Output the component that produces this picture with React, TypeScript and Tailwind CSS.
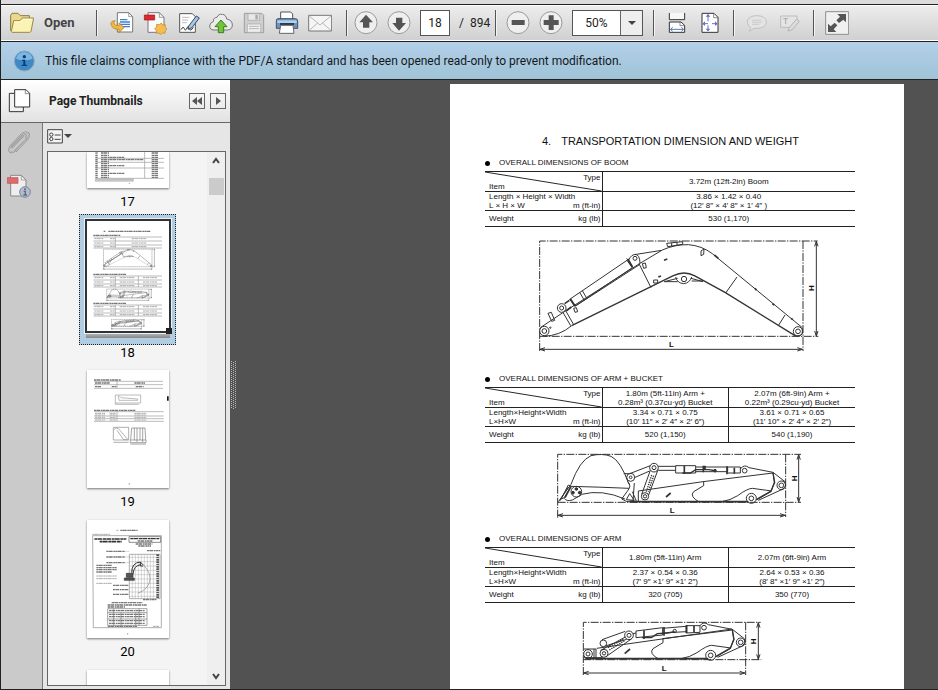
import { useState } from "react";
import type { ReactNode } from "react";

const INK = "#333";

function Icon({ box, children, size = "h-6 w-6" }: { box: string; children: ReactNode; size?: string }) {
  return (
    <svg viewBox={box} className={`${size} shrink-0`} fill="none" strokeLinejoin="round" aria-hidden="true">
      {children}
    </svg>
  );
}

function ToolButton({ label, box, children }: { label: string; box: string; children: ReactNode }) {
  return (
    <button type="button" aria-label={label} className="shrink-0">
      <Icon box={box}>{children}</Icon>
    </button>
  );
}

function Separator() {
  return <div className="h-[26px] w-px shrink-0 bg-[#555] shadow-[1px_0_0_#f4f4f4]" />;
}

/* Toolbar */

function Toolbar() {
  const [page, setPage] = useState("18");

  return (
    <div className="flex h-9 shrink-0 items-center overflow-hidden border-y border-white bg-gradient-to-b from-[#ededed] to-[#d0d0d0] pl-[9px] text-[13px] text-[#222]">
      <button type="button" className="flex w-[86px] shrink-0 items-center gap-[10px] font-bold text-[#444]">
        <Icon box="30 33 72 72">
          <path d="M32 92V46l4-6h18l7 7h27v8" fill="#ead98a" stroke="#8a7a45" strokeWidth="3" />
          <path d="M34 95l7-33h19l7-8h34l-8 40q-1 3-5 3H36z" fill="#fbf3b4" stroke="#9b8746" strokeWidth="3" />
          <path d="M42 66h20l7-8h26" stroke="#fffde0" strokeWidth="3" />
        </Icon>
        Open
      </button>
      <Separator />

      <div className="ml-[13px] mr-[14px] flex shrink-0 gap-[9px]">
        <ToolButton label="Export" box="330 33 72 72">
          <path d="M352 38h34l12 12v46h-46z" fill="#fff" stroke="#777" strokeWidth="3" />
          <path d="M386 38v12h12" stroke="#777" strokeWidth="2" />
          <path d="M360 59h22M360 66h30M360 73h30M366 80h24" stroke="#3f7fd0" strokeWidth="4" />
          <path d="M346 62q-15 0-13 12 4 14 24 14v10l15-15-15-15v9q-12 0-15-5-2-6 4-10z" fill="#f3b63f" stroke="#a97823" strokeWidth="2" />
        </ToolButton>
        <ToolButton label="Create PDF" box="429 33 72 72">
          <path d="M444 38h34l14 14v45h-48z" fill="#fafafa" stroke="#777" strokeWidth="3" />
          <path d="M478 38v14h14" stroke="#777" strokeWidth="2" />
          <rect x="433" y="45" width="31" height="15" fill="#d92a2e" stroke="#a01519" strokeWidth="2" />
          <path d="M484 69l4 6 8-1v8l5 5-5 5-1 8-8-1-5 5-5-5-8 1v-8l-5-6 6-5v-8l8 1z" fill="#f5bc4e" stroke="#b98228" strokeWidth="2" />
        </ToolButton>
        <ToolButton label="Sign document" box="528 33 72 72">
          <path d="M539 41h38l9 9v47h-47z" fill="#fff" stroke="#555" strokeWidth="3" />
          <path d="M546 52h22M546 60h18M546 68h14" stroke="#999" strokeWidth="2" />
          <path d="M543 89q7-12 10-3t8-2 7 1 12-3" stroke="#333" strokeWidth="3" />
          <path d="M566 78l23-30 9 6-22 29-12 5z" fill="#a8c5e4" stroke="#354b68" strokeWidth="3" />
        </ToolButton>
        <ToolButton label="Upload" box="627 33 72 72">
          <path d="M642 90q-13 0-13-12 0-10 11-13-1-12 11-13 4-11 16-9 11 1 13 14 17 3 17 18 0 14-15 15z" fill="#ececec" stroke="#777" strokeWidth="3" />
          <path d="M663 60l18 20h-10v18h-16V80h-10z" fill="#74c33c" stroke="#35801c" strokeWidth="3" />
        </ToolButton>
        <ToolButton label="Save" box="726 33 72 72">
          <path d="M733 40h52l6 6v52h-58z" fill="#cfcfcf" stroke="#9d9d9d" strokeWidth="3" />
          <path d="M744 41h34v20h-34z" fill="#e8e8e8" stroke="#a4a4a4" strokeWidth="2" />
          <path d="M766 44h7v14h-7z" fill="#a6a6a6" />
          <path d="M742 72h40v25h-40z" fill="#efefef" stroke="#a4a4a4" strokeWidth="2" />
          <path d="M747 79h30M747 86h30" stroke="#b6b6b6" strokeWidth="3" />
        </ToolButton>
        <ToolButton label="Print" box="825 33 72 72">
          <path d="M842 58V36h30l6 6v16" fill="#fff" stroke="#555" strokeWidth="3" />
          <path d="M834 56h52q7 0 7 7v22h-64V63q0-7 5-7z" fill="#6f93bd" stroke="#3d536e" strokeWidth="3" />
          <path d="M832 61h58v8h-58z" fill="#b5d1ea" />
          <path d="M840 69h42v6h-42z" fill="#2d3b4e" />
          <path d="M842 76h37l3 24h-44z" fill="#fff" stroke="#666" strokeWidth="3" />
        </ToolButton>
        <ToolButton label="Email" box="924 33 72 72">
          <path d="M926 46h69v47h-69z" fill="#f5f5f5" stroke="#777" strokeWidth="3" />
          <path d="M928 48l32 27 33-27M928 91l25-22M993 91l-26-22" stroke="#999" strokeWidth="2" />
        </ToolButton>
      </div>
      <Separator />

      <div className="ml-[7px] mr-[6px] flex shrink-0 items-center gap-[9px]">
        <ToolButton label="Previous page" box="43 33 72 72">
          <circle cx="79" cy="68" r="33" fill="#efefef" stroke="#999" strokeWidth="3" />
          <path d="M79 44l21 23H89v16H70V67H59z" fill="#555" />
        </ToolButton>
        <ToolButton label="Next page" box="142 33 72 72">
          <circle cx="178" cy="68" r="33" fill="#efefef" stroke="#999" strokeWidth="3" />
          <path d="M178 92l21-23h-11V53h-19v16h-11z" fill="#555" />
        </ToolButton>
        <input
          aria-label="Page number"
          value={page}
          onChange={(e) => setPage(e.target.value)}
          className="h-[26px] w-[30px] border border-[#555] bg-white text-center text-[12px]"
        />
        <span className="w-[30px] whitespace-pre text-[12px]">/  894</span>
      </div>
      <Separator />

      <div className="mx-[10px] flex shrink-0 items-center gap-[9px]">
        <ToolButton label="Zoom out" box="499 33 72 72">
          <circle cx="535" cy="68" r="33" fill="#efefef" stroke="#999" strokeWidth="3" />
          <path d="M516 60h39v15h-39z" fill="#555" />
        </ToolButton>
        <ToolButton label="Zoom in" box="598 33 72 72">
          <circle cx="634" cy="68" r="33" fill="#efefef" stroke="#999" strokeWidth="3" />
          <path d="M627 46h15v14h15v15h-15v15h-15V75h-15V60h15z" fill="#555" />
        </ToolButton>
        <div className="relative h-[26px] w-[71px]">
          <select
            aria-label="Zoom level"
            defaultValue="50"
            className="h-full w-full appearance-none border border-[#555] bg-white pr-[22px] text-center text-[12px]"
          >
            <option value="50">50%</option>
            <option value="100">100%</option>
          </select>
          <span className="pointer-events-none absolute inset-y-px right-px flex w-[22px] items-center justify-center border-l border-[#666] bg-[#eee]">
            <svg viewBox="0 0 8 4" className="h-1 w-2">
              <path d="M0 0h8L4 4z" fill="#444" />
            </svg>
          </span>
        </div>
      </div>
      <Separator />

      <div className="mx-[11px] flex shrink-0 gap-[9px]">
        <ToolButton label="Fit width" box="75 33 72 72">
          <path d="M88 39v20h46V39" fill="#f7f7f7" stroke="#333" strokeWidth="3" />
          <path d="M88 66h35l11 10v21H88z" fill="#fff" stroke="#333" strokeWidth="3" />
          <path d="M120 66v11h13" stroke="#555" strokeWidth="2" />
          <path d="M92 88h38M98 82l-7 6 7 6M124 82l7 6-7 6" stroke="#5376b4" strokeWidth="3" />
        </ToolButton>
        <ToolButton label="Fit page" box="176 33 72 72">
          <path d="M188 40h36l12 12v45h-48z" fill="#fff" stroke="#333" strokeWidth="3" />
          <path d="M223 40v13h12" stroke="#555" strokeWidth="2" />
          <path d="M206 44v20M206 76v17M191 71h15M218 71h14" stroke="#6672bb" strokeWidth="3" />
          <path d="M199 50l7-8 7 8zM199 86l7 8 7-8zM197 64l-8 7 8 7zM227 64l8 7-8 7z" fill="#6672bb" />
        </ToolButton>
      </div>
      <Separator />

      <div className="mx-[11px] flex shrink-0 gap-[9px]">
        <ToolButton label="Comment" box="315 33 72 72">
          <path d="M350 47c18 0 29 8 29 19s-11 19-28 19l-9 0-14 9 4-12c-6-4-10-9-10-16 0-11 11-19 28-19z" fill="#e4e4e4" stroke="#c0c0c0" strokeWidth="3" />
          <path d="M336 61h29M336 67h29M336 73h22" stroke="#bdbdbd" strokeWidth="2" />
        </ToolButton>
        <ToolButton label="Edit text" box="414 33 72 72">
          <path d="M456 82h-34V48h49v14" fill="#e4e4e4" stroke="#bcbcbc" strokeWidth="3" />
          <path d="M430 56h14M437 56v16" stroke="#aaa" strokeWidth="3" />
          <path d="M447 84l22-26 9 6-21 25-13 4z" fill="#ddd" stroke="#b4b4b4" strokeWidth="3" />
        </ToolButton>
      </div>
      <Separator />

      <div className="ml-[11px] flex shrink-0">
        <ToolButton label="Full screen" box="555 33 72 72">
          <rect x="557" y="35" width="69" height="68" fill="#f0f0f0" stroke="#8e8e8e" strokeWidth="3" />
          <path d="M618 42v25l-8-8-13 10-8-8 11-11-8-8zM564 96V71l8 8 12-11 8 8-11 12 8 8z" fill="#555" />
        </ToolButton>
      </div>
    </div>
  );
}

function MessageBar() {
  return (
    <div role="status" className="flex h-[37px] shrink-0 items-center gap-[9px] overflow-hidden bg-gradient-to-b from-[#b3d0e8] to-[#9fc3d7] pl-[11px] text-[12px] text-[#14181c]">
      <Icon box="36 147 72 72">
        <circle cx="73" cy="183" r="30" fill="#3f8ac4" stroke="#8fa9bf" strokeWidth="3" />
        <path d="M48 176q5-19 25-20 20 1 25 20-25 9-50 0z" fill="#7db7e0" />
        <circle cx="73" cy="170" r="5" fill="#0d3c7c" />
        <path d="M66 179h10v15h5v4H65v-4h5v-11h-4z" fill="#0d3c7c" />
      </Icon>
      <p className="whitespace-nowrap">
        This file claims compliance with the PDF/A standard and has been opened read-only to prevent modification.
      </p>
    </div>
  );
}

/* Technical drawings */

function DimensionH({ x, top, bottom }: { x: number; top: number; bottom: number }) {
  return (
    <path d={`M${x} ${top}V${bottom}M${x - 5} ${top + 16}l5-15 5 15M${x - 5} ${bottom - 16}l5 15 5-15`} />
  );
}

function DimensionL({ y, left, right }: { y: number; left: number; right: number }) {
  return (
    <path d={`M${left} ${y}H${right}M${left + 16} ${y - 5}l-15 5 15 5M${right - 16} ${y - 5}l15 5-15 5`} />
  );
}

function BoomLines() {
  return (
    <>
      <path d="M44 360V30H878M834 30V360M44 316H880" strokeDasharray="24 4 4 4" />
      <DimensionH x={874} top={30} bottom={316} />
      <DimensionL y={355} left={44} right={833} />
      <path d="M46 290L112 246 345 97 412 57Q450 40 490 41 530 44 562 68L832 290" />
      <path d="M140 284L445 134Q478 118 508 134L600 184 810 314" strokeWidth="4" />
      <path d="M56 316Q105 314 140 284M832 292V308Q824 318 808 314" />
      <circle cx="58" cy="300" r="14" />
      <circle cx="58" cy="300" r="7" />
      <circle cx="819" cy="301" r="14" />
      <circle cx="819" cy="301" r="7" />
      <path d="M115 246l22 38M123 241l22 38M342 98l36 72M636 138l-34 48M780 252l-20 32" />
      <path d="M134 205L306 88l16 22L152 224zM164 184l14 24M172 179l14 24M305 82l18 26" />
      <path d="M136 204l14 22M308 84l14 24" strokeWidth="6" />
      <path d="M150 226L345 100" />
      <circle cx="110" cy="231" r="13" />
      <circle cx="110" cy="231" r="6" />
      <path d="M119 218l14-10M123 240l16-12" strokeWidth="5" />
      <path d="M312 86Q318 70 334 70L410 58M345 96Q344 70 330 70" />
      <circle cx="330" cy="82" r="6" />
      <path d="M425 37l48-5v8l-45 7zM440 36v10M456 34v9" />
      <path d="M69 247l10-3 10 24-9 3z" />
      <circle cx="76" cy="290" r="2" />
      <path d="M352 98l9-2 3 14-8 2zM146 232l8-2 4 12-8 2zM528 60l9-6-1 16-8 4zM386 147l12 0 0 9-12 0z" />
      <path d="M417 88l10-4M400 138l8-3" strokeWidth="5" />
      <path d="M418 152l40-10M498 142l36 10M452 138q4 18 24 20 18-2 24-20M418 152h40M500 150h34" />
      <circle cx="477" cy="144" r="8" />
      <path d="M568 72l12 10M690 172l4 6M742 218l6 4M798 262l6 4" strokeWidth="5" />
    </>
  );
}

function BoomDrawing() {
  return (
    <svg viewBox="0 0 930 375" className="ml-10 mt-1 h-[125px] w-[310px]" fill="none" stroke={INK} strokeWidth="3" role="img" aria-label="Boom dimensions">
      <BoomLines />
      <g fill="#111" stroke="none" fontSize="24" fontWeight="bold">
        <text x="432" y="348">L</text>
        <text transform="translate(868 180) rotate(-90)">H</text>
      </g>
    </svg>
  );
}

// Body of the arm, shared by the arm + bucket and the arm-only views
function ArmBody() {
  return (
    <>
      <path d="M586 66q12-16 26-4L684 76 720 104q6 14-6 22L640 160M684 76l4 30-10 28-42 24" />
      <path d="M684 78l5 28-11 26-44 26" strokeWidth="4" />
      <path d="M684 78L474 104M476 104v12l-30 18q-14 14 18 32M530 164q26-4 48-18 30-22 44-22l58 8" />
      <circle cx="599" cy="71" r="7" />
      <circle cx="709" cy="115" r="13" />
      <circle cx="709" cy="115" r="7" />
      <circle cx="619" cy="154" r="15" />
      <circle cx="619" cy="154" r="7" />
    </>
  );
}

function ArmBucketLines() {
  return (
    <>
      <path d="M38 212V22H768M722 22V210M38 166H768" strokeDasharray="24 4 4 4" />
      <DimensionH x={761} top={22} bottom={166} />
      <DimensionL y={205} left={38} right={721} />
      <path d="M40 164L78 112Q104 40 138 26q34-8 60 2 28 12 54 84M78 118Q160 120 252 124M110 142q60-16 130 14" />
      <path d="M48 156l22-42 8 4-20 34zM58 154q6 10 24 5l28-16M44 162l26-42" />
      <path d="M60 152l18-34" strokeWidth="5" />
      <circle cx="94" cy="134" r="16" />
      <g fill={INK}>
        <circle cx="94" cy="126" r="4" />
        <circle cx="84" cy="137" r="4" />
        <circle cx="104" cy="137" r="4" />
      </g>
      <path d="M236 80h18l62-24M268 92l46-20M248 104q14 12-2 30l-16 22q14 12 34 6l4-54" />
      <circle cx="257" cy="91" r="12" />
      <circle cx="257" cy="91" r="4" />
      <circle cx="327" cy="62" r="13" />
      <circle cx="327" cy="62" r="6" />
      <circle cx="300" cy="148" r="11" />
      <circle cx="300" cy="148" r="5" />
      <path d="M316 70l-26 72M339 68l-28 76" />
      <path d="M320 84l-16 50M326 86l-16 48" strokeWidth="4" strokeDasharray="4 3" />
      <path d="M244 158l10-18 14 20zM262 134l12 28M280 132v32" />
      <path d="M254 164H610" strokeWidth="5" />
      <path d="M280 132L474 104M340 58h52M340 70h52" />
      <path d="M363 150l14-12" strokeWidth="5" />
      <path d="M392 56h60v22h-60zM452 60h96v14h-96M546 60h40v18h-40" />
      <path d="M418 56v24M475 56v20M546 58v24M568 62v18M480 56v10" strokeWidth="5" />
      <path d="M412 78h24l16-10 40 0 22 4" strokeWidth="4" />
      <circle cx="510" cy="71" r="4" />
      <ArmBody />
    </>
  );
}

function ArmBucketDrawing() {
  return (
    <svg viewBox="0 0 795 225" className="ml-[60px] mt-1 h-[75px] w-[265px]" fill="none" stroke={INK} strokeWidth="3" role="img" aria-label="Arm and bucket dimensions">
      <ArmBucketLines />
      <g fill="#111" stroke="none" fontSize="24" fontWeight="bold">
        <text x="374" y="199">L</text>
        <text transform="translate(757 103) rotate(-90)">H</text>
      </g>
    </svg>
  );
}

function ArmLines() {
  return (
    <>
      <path d="M40 186V28H572M527 28V186M40 140H574" strokeDasharray="24 4 4 4" />
      <DimensionH x={565} top={28} bottom={140} />
      <DimensionL y={180} left={40} right={525} />
      <path d="M46 137H415" strokeWidth="5" />
      <circle cx="54" cy="123" r="13" />
      <circle cx="54" cy="123" r="6" />
      <path d="M42 108h36v26H42M72 108v26" />
      <path d="M80 106L486 48M78 134h20" />
      <circle cx="102" cy="121" r="12" />
      <circle cx="102" cy="121" r="5" />
      <circle cx="100" cy="91" r="10" />
      <circle cx="177" cy="67" r="13" />
      <circle cx="177" cy="67" r="6" />
      <path d="M96 80l70-25M106 99l64-20M92 112l74-40M112 128l72-50" />
      <path d="M114 104l48-27M118 111l46-28" strokeWidth="4" strokeDasharray="4 3" />
      <path d="M164 122l16-14" strokeWidth="5" />
      <path d="M198 54l80-10v22l-80 8zM278 46l70-6M278 60l70-4M348 38h42v20l-42 2zM188 62l10-2" />
      <path d="M222 52v26M282 42v26M350 36v24M372 38v20" strokeWidth="5" />
      <path d="M216 74h28l18-12 30-2 22-4" strokeWidth="4" />
      <circle cx="314" cy="54" r="5" />
      <g transform="translate(-197 -27)">
        <ArmBody />
      </g>
    </>
  );
}

function ArmDrawing() {
  return (
    <svg viewBox="0 0 615 225" className="ml-[85px] mt-[10px] h-[75px] w-[205px]" fill="none" stroke={INK} strokeWidth="3" role="img" aria-label="Arm dimensions">
      <ArmLines />
      <g fill="#111" stroke="none" fontSize="24" fontWeight="bold">
        <text x="275" y="173">L</text>
        <text transform="translate(558 94) rotate(-90)">H</text>
      </g>
    </svg>
  );
}

/* Document page */

type SpecColumn = { type: string[]; size: string[]; weight: string };

function SpecTable({ title, times, columns }: { title: string; times: string; columns: SpecColumn[] }) {
  return (
    <section>
      <h2 className="flex h-3 items-center gap-[9px] text-[8px] leading-3">
        <span className="h-[5px] w-[5px] rounded-full bg-black" />
        {title}
      </h2>
      <table className="mt-[2px] w-[370px] table-fixed border-collapse border-y border-[#222] text-center text-[8px] leading-[9px]">
        <thead>
          <tr className="h-[20px] border-b border-[#222]">
            <th className="relative w-[117px] border-r border-[#222] p-0 font-normal">
              <svg viewBox="0 0 117 20" preserveAspectRatio="none" className="absolute inset-0 h-full w-full">
                <path d="M0 0L117 20" stroke="#222" />
              </svg>
              <div className="flex h-[19px] justify-between pl-1 pr-px">
                <span className="self-end">Item</span>
                <span className="pt-px">Type</span>
              </div>
            </th>
            {columns.map((col) => (
              <th key={col.weight} className="border-r border-[#222] p-0 font-normal last:border-r-0">
                {col.type.map((line) => (
                  <div key={line}>{line}</div>
                ))}
              </th>
            ))}
          </tr>
        </thead>
        <tbody>
          <tr className="h-[19px] border-b border-[#222]">
            <th className="border-r border-[#222] p-0 pl-1 pr-px text-left font-normal">
              <div>{`Length${times}Height${times}Width`}</div>
              <div className="flex justify-between">
                <span>{`L${times}H${times}W`}</span>
                <span>m (ft-in)</span>
              </div>
            </th>
            {columns.map((col) => (
              <td key={col.weight} className="whitespace-nowrap border-r border-[#222] p-0 last:border-r-0">
                {col.size.map((line) => (
                  <div key={line}>{line}</div>
                ))}
              </td>
            ))}
          </tr>
          <tr className="h-[16px]">
            <th className="border-r border-[#222] p-0 pl-1 pr-px font-normal">
              <div className="flex justify-between">
                <span>Weight</span>
                <span>kg (lb)</span>
              </div>
            </th>
            {columns.map((col) => (
              <td key={col.weight} className="border-r border-[#222] p-0 last:border-r-0">
                {col.weight}
              </td>
            ))}
          </tr>
        </tbody>
      </table>
    </section>
  );
}

const boom: SpecColumn[] = [
  { type: ["3.72m (12ft-2in) Boom"], size: ["3.86 × 1.42 × 0.40", "(12′ 8″ × 4′ 8″ × 1′ 4″ )"], weight: "530 (1,170)" },
];

const armBucket: SpecColumn[] = [
  { type: ["1.80m (5ft-11in) Arm +", "0.28m³ (0.37cu·yd) Bucket"], size: ["3.34 × 0.71 × 0.75", "(10′ 11″ × 2′ 4″ × 2′ 6″)"], weight: "520 (1,150)" },
  { type: ["2.07m (6ft-9in) Arm +", "0.22m³ (0.29cu·yd) Bucket"], size: ["3.61 × 0.71 × 0.65", "(11′ 10″ × 2′ 4″ × 2′ 2″)"], weight: "540 (1,190)" },
];

const arm: SpecColumn[] = [
  { type: ["1.80m (5ft-11in) Arm"], size: ["2.37 × 0.54 × 0.36", "(7′ 9″ ×1′ 9″ ×1′ 2″)"], weight: "320 (705)" },
  { type: ["2.07m (6ft-9in) Arm"], size: ["2.64 × 0.53 × 0.36", "(8′ 8″ ×1′ 9″ ×1′ 2″)"], weight: "350 (770)" },
];

function DocumentPage() {
  return (
    <article className="w-[454px] shrink-0 bg-white pb-px pl-[35px] pt-[50px] font-['Liberation_Sans',Arial,sans-serif] text-[#111]">
      <h1 className="mb-[9px] flex gap-[10px] pl-[57px] text-[11px] leading-[14px]">
        <span>4.</span>
        <span>TRANSPORTATION DIMENSION AND WEIGHT</span>
      </h1>
      <SpecTable title="OVERALL DIMENSIONS OF BOOM" times=" × " columns={boom} />
      <BoomDrawing />
      <div className="mt-[17px]">
        <SpecTable title="OVERALL DIMENSIONS OF ARM + BUCKET" times="×" columns={armBucket} />
      </div>
      <ArmBucketDrawing />
      <div className="mt-[11px]">
        <SpecTable title="OVERALL DIMENSIONS OF ARM" times="×" columns={arm} />
      </div>
      <ArmDrawing />
    </article>
  );
}

/* Thumbnails */

function TextRow({ x, y, w, bold }: { x: number; y: number; w: number; bold?: boolean }) {
  return <path d={`M${x} ${y}h${w}`} stroke={bold ? "#777" : "#aaa"} strokeWidth={bold ? 4 : 3} strokeDasharray="7 1 11 2 5 1" />;
}

function Thumb17() {
  const rows = [219, 226, 232, 239, 244, 251, 257, 262, 268, 274, 280, 286, 292];
  return (
    <svg viewBox="258 216 246 108" className="h-9 w-[82px]" fill="none">
      {rows.map((y, i) => (
        <g key={y}>
          <TextRow x={283} y={y} w={8} bold />
          <TextRow x={300} y={y} w={i === 3 ? 128 : i % 4 === 2 ? 70 : 24} bold />
          <TextRow x={452} y={y} w={20} bold />
        </g>
      ))}
      <path d="M283 235h206M283 247h206M283 264h206M283 295h206M431 216v79" stroke="#999" strokeWidth="2" />
      <path d="M283 297h114v7H283z" fill="#ccc" stroke="#888" />
      <path d="M385 309v3" stroke="#777" strokeWidth="2" />
    </svg>
  );
}

function ThumbTable({ y, split }: { y: number; split: boolean }) {
  return (
    <g>
      <TextRow x={157} y={y - 5} w={split ? 98 : 82} bold />
      <path d={`M157 ${y}h206M157 ${y + 12}h206M157 ${y + 24}h206M157 ${y + 33}h206M223 ${y}v33`} stroke="#999" strokeWidth="2" />
      {split && <path d={`M292 ${y}v33`} stroke="#999" strokeWidth="2" />}
      {[5, 18, 29].map((dy) => (
        <g key={dy}>
          <TextRow x={160} y={y + dy} w={28} />
          <TextRow x={207} y={y + dy} w={14} />
          <TextRow x={split ? 236 : 272} y={y + dy} w={44} />
          {split && <TextRow x={306} y={y + dy} w={42} />}
        </g>
      ))}
    </g>
  );
}

function Thumb18() {
  return (
    <svg viewBox="138 48 246 330" className="h-[110px] w-[82px]" fill="none">
      <TextRow x={188} y={79} w={5} bold />
      <TextRow x={202} y={79} w={126} bold />
      <ThumbTable y={96} split={false} />
      <svg x="179" y="127" width="172" height="69" viewBox="0 0 930 375" stroke="#777" strokeWidth="8">
        <BoomLines />
      </svg>
      <ThumbTable y={213} split />
      <svg x="190" y="248" width="147" height="42" viewBox="0 0 795 225" stroke="#666" strokeWidth="7">
        <ArmBucketLines />
      </svg>
      <ThumbTable y={300} split />
      <svg x="204" y="338" width="114" height="42" viewBox="0 0 615 225" stroke="#666" strokeWidth="7">
        <ArmLines />
      </svg>
    </svg>
  );
}

function Thumb19() {
  return (
    <svg viewBox="138 495 246 354" className="h-[118px] w-[82px]" fill="none">
      <TextRow x={159} y={525} w={80} bold />
      <path d="M159 529h207M159 539h207M159 550h207M228 529v21" stroke="#999" strokeWidth="2" />
      <TextRow x={162} y={534} w={44} bold />
      <TextRow x={280} y={534} w={32} bold />
      <TextRow x={162} y={545} w={18} bold />
      <TextRow x={212} y={545} w={14} bold />
      <TextRow x={284} y={545} w={24} bold />
      <path d="M223 570h76v24h-76zM223 594v4h70M232 572l2 14h56v-4l-50-4-6-6" stroke="#999" strokeWidth="2" />
      <path d="M378 574h5v13h-5z" fill="#111" />
      <TextRow x={159} y={616} w={124} bold />
      <path d="M159 620h209M159 633h209M159 641h209M159 649h209M228 620v29" stroke="#999" strokeWidth="2" />
      {[625, 630, 637, 645].map((y) => (
        <g key={y}>
          <TextRow x={162} y={y} w={30} />
          <TextRow x={206} y={y} w={18} />
          <TextRow x={280} y={y} w={36} />
        </g>
      ))}
      <g stroke="#888" strokeWidth="2">
        <path d="M217 667h46v38h-46zM217 712h46M218 675q10-12 18 0l24 28M228 676l20 28h12" />
        <path d="M272 669h40l2 36h-45zM280 669v36M288 669v42M297 669v36M305 669v42M268 705v8h47v-8M268 717h47" stroke="#777" />
      </g>
      <path d="M265 834v5" stroke="#777" strokeWidth="2" />
    </svg>
  );
}

function Thumb20() {
  const columns = [274, 283, 292, 301, 310, 319, 328, 337];
  const lines = [442, 455, 468, 481, 494, 507, 520, 533, 546, 559];
  return (
    <svg viewBox="138 330 246 354" className="h-[118px] w-[82px]" fill="none">
      <TextRow x={226} y={361} w={6} />
      <TextRow x={238} y={361} w={52} bold />
      <TextRow x={154} y={373} w={54} />
      <path d="M155 377h206v276H157z" stroke="#888" strokeWidth="2" />
      <path d="M264 380h95v17h-95z" stroke="#555" strokeWidth="2" />
      <path d="M160 387h96M176 395h66" stroke="#333" strokeWidth="5" strokeDasharray="9 1 14 2" />
      <path d="M268 386h88" stroke="#333" strokeWidth="4" strokeDasharray="9 1 14 2" />
      <TextRow x={290} y={393} w={44} bold />
      <TextRow x={284} y={402} w={50} bold />
      <TextRow x={292} y={408} w={38} bold />
      <TextRow x={318} y={422} w={40} bold />
      <path d="M265 433h92v133h-92z" stroke="#888" strokeWidth="2" />
      {columns.map((x) => (
        <path key={x} d={`M${x} 433v133`} stroke="#888" strokeWidth="1" />
      ))}
      {lines.map((y) => (
        <path key={y} d={`M265 ${y}h82`} stroke="#888" strokeWidth="1" />
      ))}
      <path d="M350 433v133" stroke="#555" strokeWidth="8" strokeDasharray="5 2" />
      <path d="M272 488q0-30 26-32l10 10M276 492q2-26 24-28M298 456v12h8" stroke="#333" strokeWidth="3" />
      <path d="M308 466q24 24 18 50-8 24-36 34" stroke="#888" strokeWidth="2" />
      <path d="M256 490h20v12h-20zM250 504h30v7h-30z" fill="#555" stroke="#333" strokeWidth="2" />
      {[424, 441, 458].map((y) => (
        <g key={y}>
          <TextRow x={196} y={y} w={56} bold />
          <path d={`M252 ${y}h14`} stroke="#888" strokeWidth="1" />
        </g>
      ))}
      {[466, 473, 479, 486, 498, 506, 520].map((y, i) => (
        <TextRow key={y} x={166} y={y} w={i % 3 ? 62 : 48} bold={i < 4} />
      ))}
      {[526, 539, 553].map((y) => (
        <TextRow key={y} x={216} y={y} w={46} bold />
      ))}
      <TextRow x={306} y={569} w={40} bold />
      <TextRow x={212} y={578} w={92} bold />
      <TextRow x={200} y={585} w={118} bold />
      <TextRow x={200} y={591} w={52} bold />
      <path d="M200 596h118v50H200zM200 608h118M200 627h118M218 596v50M240 608v38M284 608v38M294 596v50" stroke="#777" strokeWidth="2" />
      {[602, 613, 620, 632, 640].map((y) => (
        <TextRow key={y} x={204} y={y} w={108} bold />
      ))}
      <TextRow x={200} y={649} w={88} bold />
      <TextRow x={336} y={649} w={18} />
      <path d="M260 669v5" stroke="#777" strokeWidth="2" />
    </svg>
  );
}

function Thumbnail({ page, children }: { page?: number; children: ReactNode }) {
  return (
    <button type="button" className="flex w-[97px] shrink-0 flex-col items-center pt-[6px]">
      <span className="mb-[6px] block bg-white shadow-[0_1px_2px_#777]">{children}</span>
      {page && <span className="h-5 text-[13px] leading-4">{page}</span>}
    </button>
  );
}

function ThumbnailList() {
  return (
    <div className="flex min-h-0 flex-1 border border-[#666] bg-[#f4f4f4]">
      <div className="flex min-w-0 flex-1 flex-col items-center overflow-hidden">
        <button type="button" className="flex w-[97px] shrink-0 flex-col items-center">
          <span className="mb-[6px] block bg-white shadow-[0_1px_2px_#777]">
            <Thumb17 />
          </span>
          <span className="h-5 text-[13px] leading-4">17</span>
        </button>
        <button type="button" aria-current="page" className="flex w-[97px] shrink-0 flex-col items-center">
          <span className="flex h-[131px] w-full flex-col items-center border border-dotted border-[#222] bg-[#b1cde1] pt-[4px]">
            <span className="relative block border-2 border-[#2f3335] bg-white outline outline-1 outline-[#e8f2f8]">
              <Thumb18 />
              <span className="absolute -bottom-[3px] -right-[3px] h-[6px] w-[6px] bg-[#222]" />
            </span>
            <span className="block h-[5px] w-[84px] bg-gradient-to-b from-[#bbb] to-[#888]" />
          </span>
          <span className="h-[19px] text-[13px] leading-4">18</span>
        </button>
        <Thumbnail page={19}>
          <Thumb19 />
        </Thumbnail>
        <Thumbnail page={20}>
          <Thumb20 />
        </Thumbnail>
        <Thumbnail>
          <svg viewBox="0 0 82 118" className="h-[118px] w-[82px]" />
        </Thumbnail>
      </div>
      <div className="flex w-[18px] flex-col items-center justify-between bg-[#efefef]">
        <div className="flex flex-col items-center">
          <button type="button" aria-label="Scroll up" className="flex h-[18px] items-center">
            <svg viewBox="0 0 8 8" className="h-2 w-2" fill="none">
              <path d="M1 6l3-4 3 4" stroke="#444" strokeWidth="2" />
            </svg>
          </button>
          <div className="mt-2 h-[17px] w-[15px] bg-[#cbcbcb]" />
        </div>
        <button type="button" aria-label="Scroll down" className="flex h-[18px] items-center">
          <svg viewBox="0 0 8 8" className="h-2 w-2" fill="none">
            <path d="M1 2l3 4 3-4" stroke="#444" strokeWidth="2" />
          </svg>
        </button>
      </div>
    </div>
  );
}

function SidePanel() {
  return (
    <aside className="flex w-[229px] shrink-0 flex-col bg-[#e6e6e6]">
      <header className="flex h-[43px] shrink-0 items-center border-b border-[#666] bg-gradient-to-b from-white to-[#e2e2e2] pl-[7px] pr-1">
        <button type="button" aria-label="Page thumbnails">
          <Icon box="24 27 72 72">
            <path d="M28 40h42v55H28z" fill="#f2f2f2" stroke="#333" strokeWidth="3" />
            <path d="M44 29h34l11 11v41H44z" fill="#fff" stroke="#333" strokeWidth="3" />
            <path d="M76 30v11h12" stroke="#555" strokeWidth="2" />
          </Icon>
        </button>
        <h2 className="ml-[17px] flex-1 whitespace-nowrap text-[12px] font-bold text-[#222]">Page Thumbnails</h2>
        <div className="flex gap-[5px]">
          <button type="button" aria-label="Collapse" className="flex h-4 w-4 items-center justify-center border border-[#666]">
            <svg viewBox="0 0 10 8" className="h-2 w-[10px]">
              <path d="M5 0v8L0 4zM10 0v8L5 4z" fill="#555" />
            </svg>
          </button>
          <button type="button" aria-label="Expand" className="flex h-4 w-4 items-center justify-center border border-[#666]">
            <svg viewBox="0 0 5 8" className="h-2 w-[5px]">
              <path d="M0 0v8l5-4z" fill="#555" />
            </svg>
          </button>
        </div>
      </header>

      <div className="flex min-h-0 flex-1">
        <nav className="flex w-[42px] shrink-0 flex-col gap-[19px] border-r border-[#777] bg-[#cacaca] pl-[6px] pt-2">
          <button type="button" aria-label="Attachments" className="w-6">
            <Icon box="21 154 72 72">
              <path d="M36 204l35-36q7-5 8 2t-6 14l-28 29q-10 9-16 2-5-7 4-17l32-34q10-9 19-4 7 6-1 17l-34 37" stroke="#888" strokeWidth="5" strokeLinecap="round" />
              <path d="M36 204l35-36q7-5 8 2t-6 14l-28 29q-10 9-16 2-5-7 4-17l32-34q10-9 19-4 7 6-1 17l-34 37" stroke="#e2e2e2" strokeWidth="2" strokeLinecap="round" />
            </Icon>
          </button>
          <button type="button" aria-label="Standards" className="w-6">
            <Icon box="21 283 72 72">
              <path d="M32 287h32l14 14v48H32z" fill="#eee" stroke="#888" strokeWidth="3" />
              <path d="M64 287v14h14" stroke="#888" strokeWidth="2" />
              <path d="M22 294h32v17H22z" fill="#e06b6f" stroke="#b95054" strokeWidth="2" />
              <circle cx="75" cy="337" r="16" fill="#b2bccd" stroke="#7d8798" strokeWidth="3" />
              <circle cx="75" cy="329" r="3" fill="#596a86" />
              <path d="M71 335h5v11M70 346h11" stroke="#596a86" strokeWidth="4" />
            </Icon>
          </button>
        </nav>
        <div className="flex min-w-0 flex-1 flex-col px-1 pb-[3px]">
          <button type="button" aria-label="Thumbnail options" className="flex h-7 shrink-0 items-center gap-px pb-[2px]">
            <svg viewBox="0 0 48 45" className="h-[15px] w-4" fill="none" stroke="#444" strokeWidth="3">
              <path d="M2 2h44v40H2z" fill="#f4f4f4" />
              <circle cx="13" cy="17" r="5" />
              <circle cx="13" cy="30" r="5" />
              <path d="M23 18h18M23 31h18" />
            </svg>
            <svg viewBox="0 0 8 4" className="h-1 w-2">
              <path d="M0 0h8L4 4z" fill="#444" />
            </svg>
          </button>
          <ThumbnailList />
        </div>
      </div>
    </aside>
  );
}

export default function App() {
  return (
    <div className="flex h-screen flex-col overflow-hidden border-b border-l border-[#222] bg-[#525252] font-['Roboto','Open_Sans',sans-serif]">
      <div className="h-[5px] shrink-0 border-b border-[#222] bg-[#dcdcdc]" />
      <Toolbar />
      <div className="h-px shrink-0 bg-[#222]" />
      <MessageBar />
      <div className="h-px shrink-0 bg-[#222]" />
      <div className="flex min-h-0 flex-1">
        <SidePanel />
        <div className="flex w-[7px] shrink-0 items-center justify-center">
          <svg viewBox="0 0 10 96" className="h-12 w-[5px]" stroke="#bbb" strokeWidth="2" strokeDasharray="2 2">
            <path d="M1 0v96M5 2v94M9 0v96" />
          </svg>
        </div>
        <main className="flex min-w-0 flex-1 items-start justify-end overflow-hidden pr-[34px] pt-1">
          <DocumentPage />
        </main>
      </div>
    </div>
  );
}
